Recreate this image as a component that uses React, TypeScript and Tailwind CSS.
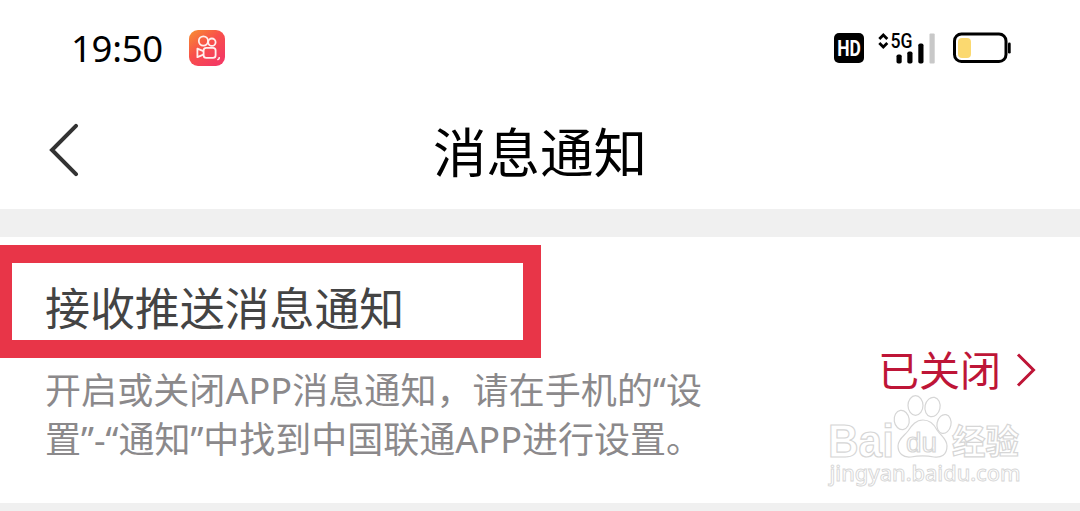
import React from 'react';

const fontClass = "font-['Noto_Sans','Noto_Sans_CJK_SC',sans-serif]";

const description = [
  '开启或关闭APP消息通知，请在手机的“设',
  '置”-“通知”中找到中国联通APP进行设置。',
];

const KuaishouIcon: React.FC = () => (
  <svg width="36" height="36" viewBox="0 0 36 36" fill="none" className="shrink-0">
    <defs>
      <linearGradient id="ks" x1="0" y1="2" x2="26" y2="34" gradientUnits="userSpaceOnUse">
        <stop stopColor="#f78c32" />
        <stop offset="0.5" stopColor="#f8504a" />
        <stop offset="1" stopColor="#f43a62" />
      </linearGradient>
    </defs>
    <rect width="36" height="36" rx="9" fill="url(#ks)" />
    <g stroke="#fff0ee" strokeWidth="1.8" strokeLinejoin="round">
      <circle cx="14.4" cy="11" r="4.6" />
      <circle cx="22.9" cy="12.2" r="3.7" />
      <rect x="14.6" y="17.8" width="12" height="10" rx="2.6" />
      <path d="M14.4 21.2 8.4 18.6v8.6l6-2.6" />
      <path d="M30.2 27v1.6l-1.8 1.3" strokeWidth="1.4" />
    </g>
  </svg>
);

const SignalIcon: React.FC = () => (
  <svg width="58" height="34" viewBox="0 0 58 34" className="shrink-0">
    <path d="M1.3 8 5.3 4l4 4M1.3 12l4 4 4-4" fill="none" stroke="#000" strokeWidth="2.8" />
    <text x="12.6" y="16.5" textLength="22" lengthAdjust="spacingAndGlyphs" className="font-['Roboto',sans-serif] text-[19.5px] font-medium">
      5G
    </text>
    <rect x="18.5" y="23.5" width="5.2" height="9" rx="1.8" />
    <rect x="29.3" y="20.5" width="5.2" height="12" rx="1.8" />
    <rect x="40.3" y="12.5" width="5.2" height="20" rx="1.8" />
    <rect x="51.5" y="2.5" width="5.2" height="30" rx="1" fill="#c8c8c8" />
  </svg>
);

const BatteryIcon: React.FC = () => (
  <svg width="60" height="32" viewBox="0 0 60 32" className="shrink-0">
    <rect x="1.5" y="2" width="51.5" height="27.5" rx="7" fill="none" stroke="#000" strokeWidth="3" />
    <rect x="5" y="6" width="13" height="20" rx="4" fill="#fbd970" />
    <rect x="55" y="10.5" width="2.7" height="11" rx="1.3" />
  </svg>
);

const StatusBar: React.FC = () => (
  <div className="flex h-24 items-center justify-between pl-[71px] pr-[67px]">
    <div className="flex items-center">
      <span className="w-[118px] text-[36.5px] leading-none tracking-[-0.3px]">19:50</span>
      <KuaishouIcon />
    </div>
    <div className="flex items-center">
      <svg width="30" height="30" viewBox="0 0 30 30" className="shrink-0">
        <rect width="30" height="30" rx="5" />
        <text x="3.2" y="22.8" textLength="23.6" lengthAdjust="spacingAndGlyphs" fill="#fff" className="font-['Roboto',sans-serif] text-[22px] font-bold">
          HD
        </text>
      </svg>
      <div className="ml-[14px] mr-[17px]">
        <SignalIcon />
      </div>
      <BatteryIcon />
    </div>
  </div>
);

const NavBar: React.FC = () => (
  <div className="grid h-[113px] grid-cols-[100px_1fr_100px] items-center">
    <svg width="32" height="54" viewBox="0 0 32 54" fill="none" className="mb-[5px] ml-12" stroke="#333" strokeWidth="4" strokeLinecap="round">
      <path d="M28 2.8 4 27l24 24.2" />
    </svg>
    <h1 className="text-center text-[53.5px] leading-none text-black">消息通知</h1>
  </div>
);

// 百度经验 outlined mark over the bottom right corner
const Watermark: React.FC = () => (
  <svg width="216" height="110" viewBox="0 0 216 110" className="absolute left-[820px] top-[152px]">
    <g fill="#fff" fillOpacity="0.85" stroke="#d6d6d6" strokeWidth="1.2">
      <text x="8" y="67.5" textLength="66" lengthAdjust="spacingAndGlyphs" className="font-['Liberation_Sans',sans-serif] text-[46px] font-bold">
        Bai
      </text>
      <path d="M103 31c7 0 11 4 14 10 4 6 10 9 10 16 0 9-6 12-13 11-8-1.5-15-1.5-23 0-8 1-13-4-13-11 0-7 6-10 10-15 4-6 8-11 15-11Z" />
      <ellipse cx="81.7" cy="31" rx="7.5" ry="9.7" transform="rotate(-8 81.7 31)" />
      <ellipse cx="95.5" cy="16.5" rx="7.5" ry="9.8" />
      <ellipse cx="112.5" cy="18" rx="7.5" ry="9.8" transform="rotate(12 112.5 18)" />
      <ellipse cx="124" cy="35" rx="7" ry="9.5" transform="rotate(12 124 35)" />
      <text x="86" y="62.5" textLength="31" lengthAdjust="spacingAndGlyphs" className="font-['Liberation_Sans',sans-serif] text-[28px]">
        du
      </text>
      <text x="132" y="65" textLength="67" lengthAdjust="spacingAndGlyphs" className="font-['Noto_Sans_CJK_SC',sans-serif] text-[34px] font-bold">
        经验
      </text>
      <text x="9.5" y="92" textLength="191" lengthAdjust="spacingAndGlyphs" strokeWidth="0.9" className="font-['Noto_Sans',sans-serif] text-[21.5px] font-medium">
        jingyan.baidu.com
      </text>
    </g>
  </svg>
);

const App: React.FC = () => (
  <div className={`${fontClass} h-[511px] w-[1080px] overflow-hidden bg-white`}>
    <StatusBar />
    <NavBar />
    <div className="h-7 bg-[#f0f0f0]" />
    <div className="relative flex h-[266px] justify-between pl-[45px] pr-[44px]">
      <div className="pt-[47px]">
        <h2 className="text-[45px] leading-[50px] tracking-[-0.1px] text-[#444]">接收推送消息通知</h2>
        <div className="mt-[32px] text-[36px] leading-[49px] text-[#8b898b]">
          {description.map((line) => (
            <p key={line} className="whitespace-nowrap first:tracking-[0.08px]">{line}</p>
          ))}
        </div>
      </div>
      <div className="mt-[113px] flex h-10 items-center text-[#be1537]">
        <span className="text-[41px] leading-10">已关闭</span>
        <svg width="20" height="36" viewBox="0 0 20 36" fill="none" stroke="currentColor" strokeWidth="3" className="ml-[15px]">
          <path d="M2 2.5 17.5 18 2 33.5" />
        </svg>
      </div>
      {/* highlight frame round the heading */}
      <div className="absolute left-0 top-2 h-[113px] w-[541px] border-y-[18px] border-l-[12px] border-r-[18px] border-[#e83548]" />
      <Watermark />
    </div>
    <div className="h-2 bg-[#f0f0f0]" />
  </div>
);

export default App;
